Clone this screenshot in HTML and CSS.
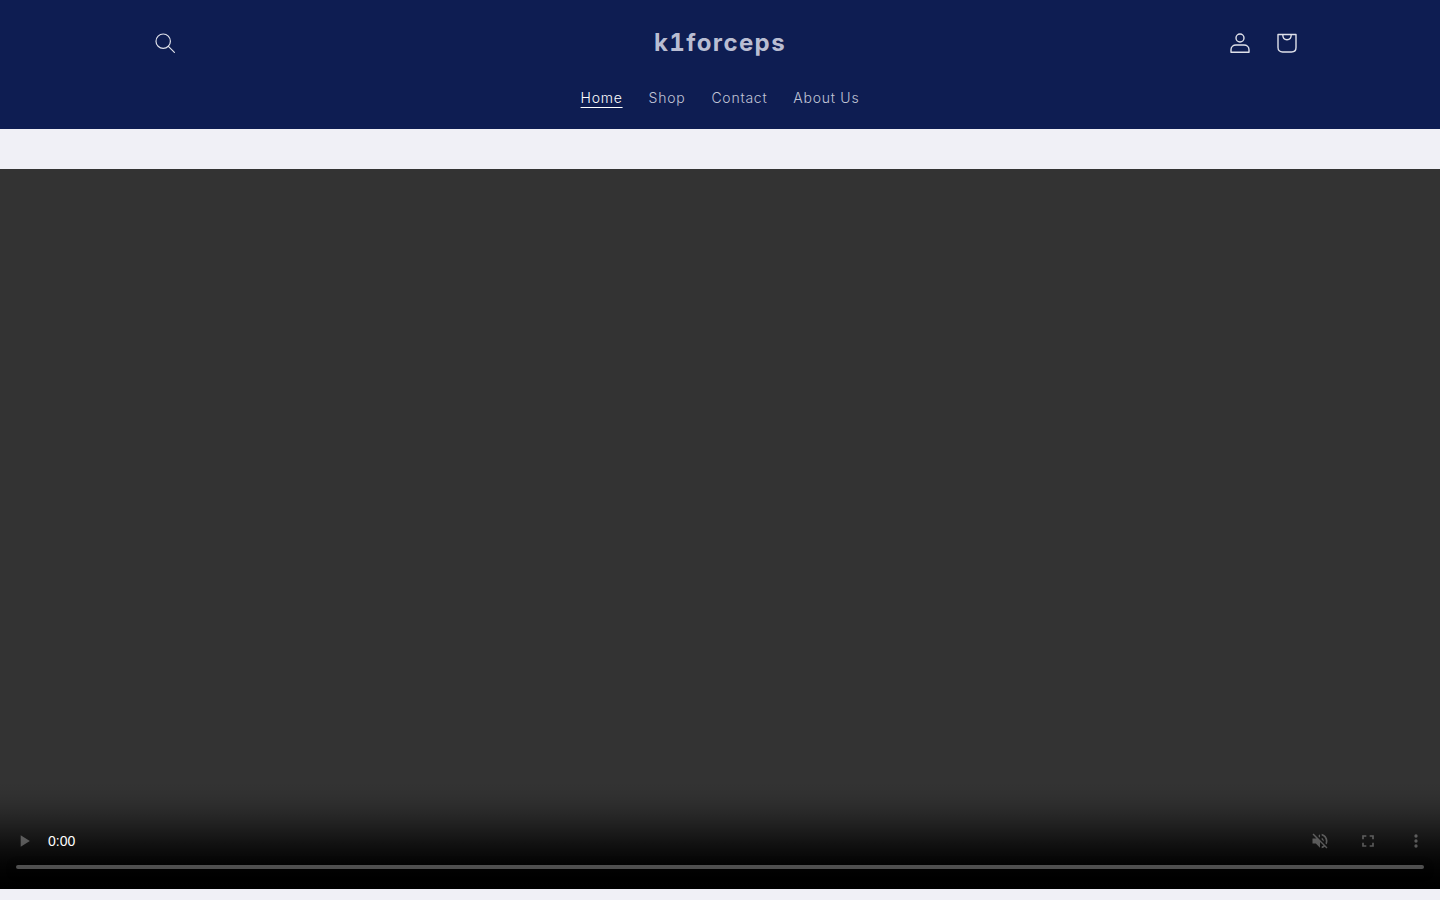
FILE: index.html
```html
<!DOCTYPE html>
<html lang="en">
<head>
    <meta charset="UTF-8">
    <meta name="viewport" content="width=device-width, initial-scale=1.0">
    <title>k1forceps</title>
    <link rel="stylesheet" href="styles.css">
</head>
<body>
    <header class="header">
        <div class="header-top">
            <a class="icon-btn search-btn" href="#" aria-label="Search">
                <svg width="22" height="22" viewBox="0 0 22 22" fill="none" stroke="currentColor" stroke-width="1.2">
                    <circle cx="9.2" cy="9.2" r="7.2"/>
                    <path d="M14.4 14.4L20.4 20.4" stroke-linecap="round"/>
                </svg>
            </a>
            <a class="logo" href="#">k1forceps</a>
            <div class="header-icons">
                <a class="icon-btn" href="#" aria-label="Log in">
                    <svg width="22" height="22" viewBox="0 0 22 22" fill="none" stroke="currentColor" stroke-width="1.4">
                        <circle cx="11" cy="6" r="4"/>
                        <path d="M2 20.2v-2.4c0-3 2.4-4.8 5-4.8h8c2.6 0 5 1.800 5 4.800v2.400z" stroke-linejoin="round"/>
                    </svg>
                </a>
                <a class="icon-btn" href="#" aria-label="Cart">
                    <svg width="22" height="22" viewBox="0 0 22 22" fill="none" stroke="currentColor" stroke-width="1.4">
                        <path d="M2 2.500h18v13c0 2.800-2 4.500-4.500 4.500h-9C4 20 2 18.300 2 15.500z" stroke-linejoin="round"/>
                        <path d="M6.800 2.800c0 3.200 1.800 5 4.200 5s4.200-1.800 4.200-5"/>
                    </svg>
                </a>
            </div>
        </div>
        <nav class="nav">
            <a class="nav-link active" href="#">Home</a>
            <a class="nav-link" href="#">Shop</a>
            <a class="nav-link" href="#">Contact</a>
            <a class="nav-link" href="#">About Us</a>
        </nav>
    </header>
    <main class="main">
        <video class="video" controls muted></video>
    </main>
</body>
</html>
```

FILE: styles.css
```css
body {
    margin: 0;
    background: #f0f0f6;
    font-family: "Inter", sans-serif;
    overflow: hidden;
}

a {
    color: inherit;
    text-decoration: none;
}

.header {
    background: #0e1d52;
    color: #c0c4d6;
    height: 129px;
}

.header-top {
    display: grid;
    grid-template-columns: 1fr auto 1fr;
    align-items: center;
    height: 85px;
    padding: 0 130px;
}

.icon-btn {
    width: 47px;
    height: 44px;
    display: flex;
    align-items: center;
    justify-content: center;
    color: #dfe1ea;
}

.search-btn {
    margin-left: 11px;
}

.logo {
    font-weight: 700;
    font-size: 24px;
    letter-spacing: 1.4px;
    font-feature-settings: "tnum";
    color: #b9bdd2;
}

.header-icons {
    display: flex;
    justify-content: flex-end;
    padding-top: 1px;
}

.nav {
    display: flex;
    justify-content: center;
    gap: 26px;
    font-size: 14px;
    font-weight: 300;
    letter-spacing: 0.75px;
    line-height: 20px;
    padding-top: 3px;
}

.nav-link.active {
    color: #fff;
    text-decoration: underline;
    text-underline-offset: 4px;
}

.main {
    padding-top: 40px;
}

.video {
    display: block;
    width: 1440px;
    height: 720px;
    background: #333;
}

.video::-webkit-media-controls-current-time-display {
    font-family: "Liberation Sans", sans-serif;
}
```
